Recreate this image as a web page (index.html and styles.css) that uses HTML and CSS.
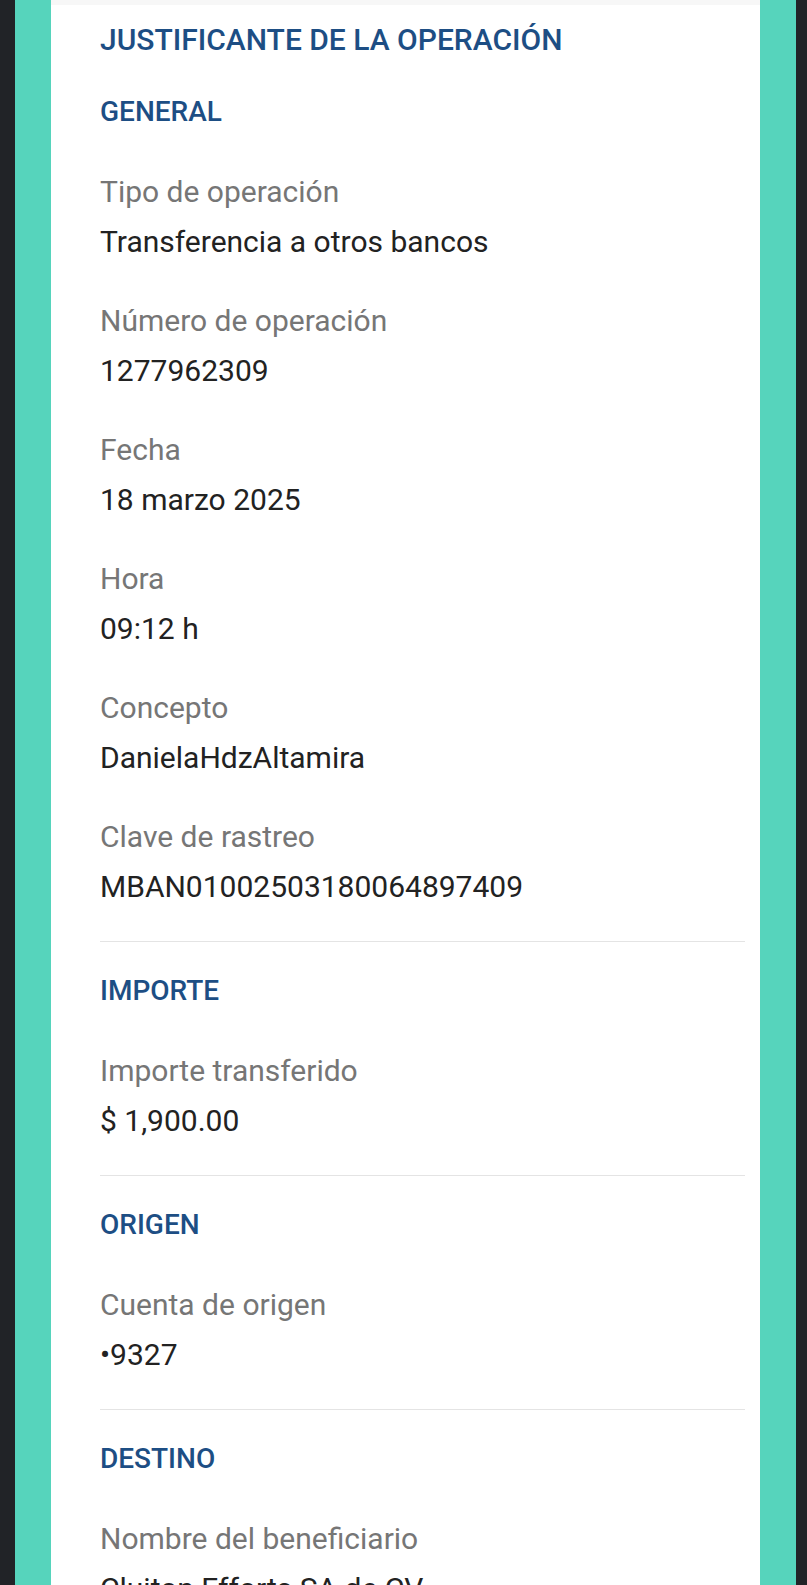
FILE: index.html
```html
<!DOCTYPE html>
<html>
	<head>
		<meta charset="UTF-8">
		<title>Justificante</title>
		<link rel="stylesheet" href="styles.css">
	</head>
	<body>
		<div class="marco">
			<div class="hoja">
				<h1 class="titulo">JUSTIFICANTE DE LA OPERACIÓN</h1>

				<div class="bloque">
					<h2 class="bloque-tit">GENERAL</h2>
					<div class="dato">
						<div class="etq">Tipo de operación</div>
						<div class="val">Transferencia a otros bancos</div>
					</div>
					<div class="dato">
						<div class="etq">Número de operación</div>
						<div class="val">1277962309</div>
					</div>
					<div class="dato">
						<div class="etq">Fecha</div>
						<div class="val">18 marzo 2025</div>
					</div>
					<div class="dato">
						<div class="etq">Hora</div>
						<div class="val">09:12 h</div>
					</div>
					<div class="dato">
						<div class="etq">Concepto</div>
						<div class="val">DanielaHdzAltamira</div>
					</div>
					<div class="dato">
						<div class="etq">Clave de rastreo</div>
						<div class="val">MBAN01002503180064897409</div>
					</div>
				</div>

				<div class="bloque">
					<h2 class="bloque-tit">IMPORTE</h2>
					<div class="dato">
						<div class="etq">Importe transferido</div>
						<div class="val">$ 1,900.00</div>
					</div>
				</div>

				<div class="bloque">
					<h2 class="bloque-tit">ORIGEN</h2>
					<div class="dato">
						<div class="etq">Cuenta de origen</div>
						<div class="val">•9327</div>
					</div>
				</div>

				<div class="bloque">
					<h2 class="bloque-tit">DESTINO</h2>
					<div class="dato">
						<div class="etq">Nombre del beneficiario</div>
						<div class="val">Cluiton Efforts SA de CV</div>
					</div>
				</div>
			</div>
		</div>
	</body>
</html>
```

FILE: styles.css
```css
html, body{
	margin: 0;
	padding: 0;
	height: 100%;
}
body{
	background: #212327;
	padding: 0 11px 0 15px;		/*franjas oscuras de los lados*/
	box-sizing: border-box;
	overflow: hidden;
	font-family: Roboto, "Liberation Sans", sans-serif;
}
.marco{
	height: 100%;
	background: #56d4bc;
	padding: 0 36px;
}
.hoja{
	height: 100%;
	background: #fff;
	padding: 0 15px 0 49px;
	overflow: hidden;
	border-top: 5px solid #f7f7f7;		/*sombra de la barra superior*/
	box-sizing: border-box;
}
.titulo{
	margin: 12px 0 0;
	font-size: 30px;
	line-height: 46px;
	font-weight: 500;
	color: #1d4e84;
}
.bloque{
	display: flex;
	flex-direction: column;
	gap: 30px;
	padding: 24px 0 30px;
	border-bottom: 1px solid #e4e4e4;
}
.bloque-tit{
	margin: 0;
	font-size: 28px;
	line-height: 50px;
	font-weight: 500;
	color: #1d4e84;
}
.etq{
	font-size: 30px;
	line-height: 50px;
	color: #767676;
}
.val{
	font-size: 30px;
	line-height: 49px;
	color: #222;
}
```
